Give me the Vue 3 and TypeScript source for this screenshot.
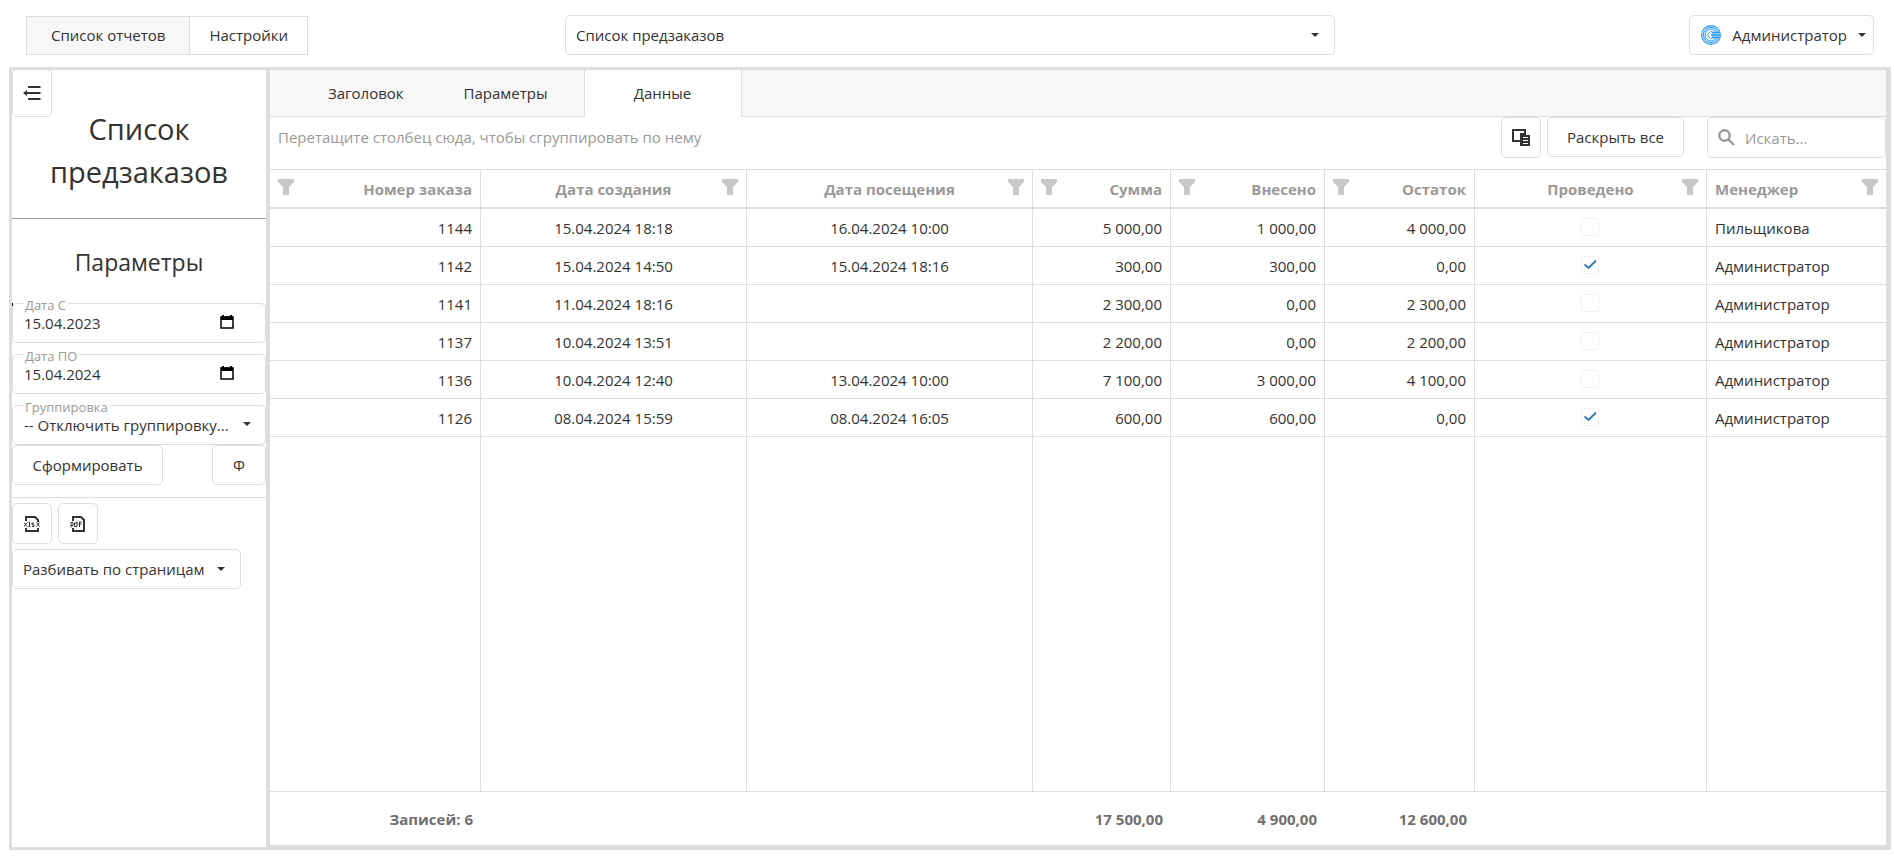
<script setup lang="ts">
import { computed, ref } from 'vue'

type Align = 'left' | 'center' | 'right'
type Field = 'number' | 'created' | 'visit' | 'sum' | 'paid' | 'rest' | 'posted' | 'manager'

interface Column {
  key: Field
  title: string
  align: Align
  weight: number
  total?: string
}

interface Order {
  number: string
  created: string
  visit: string
  sum: string
  paid: string
  rest: string
  posted: boolean
  manager: string
}

const columns: Column[] = [
  { key: 'number', title: 'Номер заказа', align: 'right', weight: 211, total: 'Записей: 6' },
  { key: 'created', title: 'Дата создания', align: 'center', weight: 266 },
  { key: 'visit', title: 'Дата посещения', align: 'center', weight: 286 },
  { key: 'sum', title: 'Сумма', align: 'right', weight: 138, total: '17 500,00' },
  { key: 'paid', title: 'Внесено', align: 'right', weight: 154, total: '4 900,00' },
  { key: 'rest', title: 'Остаток', align: 'right', weight: 150, total: '12 600,00' },
  { key: 'posted', title: 'Проведено', align: 'center', weight: 232 },
  { key: 'manager', title: 'Менеджер', align: 'left', weight: 179 },
]

const totalWeight = columns.reduce((acc, c) => acc + c.weight, 0)

const orders: Order[] = [
  { number: '1144', created: '15.04.2024 18:18', visit: '16.04.2024 10:00', sum: '5 000,00', paid: '1 000,00', rest: '4 000,00', posted: false, manager: 'Пильщикова' },
  { number: '1142', created: '15.04.2024 14:50', visit: '15.04.2024 18:16', sum: '300,00', paid: '300,00', rest: '0,00', posted: true, manager: 'Администратор' },
  { number: '1141', created: '11.04.2024 18:16', visit: '', sum: '2 300,00', paid: '0,00', rest: '2 300,00', posted: false, manager: 'Администратор' },
  { number: '1137', created: '10.04.2024 13:51', visit: '', sum: '2 200,00', paid: '0,00', rest: '2 200,00', posted: false, manager: 'Администратор' },
  { number: '1136', created: '10.04.2024 12:40', visit: '13.04.2024 10:00', sum: '7 100,00', paid: '3 000,00', rest: '4 100,00', posted: false, manager: 'Администратор' },
  { number: '1126', created: '08.04.2024 15:59', visit: '08.04.2024 16:05', sum: '600,00', paid: '600,00', rest: '0,00', posted: true, manager: 'Администратор' },
]

const tabs = ['Заголовок', 'Параметры', 'Данные']
const activeTab = ref('Данные')
const dateFrom = ref('15.04.2023')
const dateTo = ref('15.04.2024')
const search = ref('')

const visibleOrders = computed(() =>
  orders.filter((o) => Object.values(o).join(' ').toLowerCase().includes(search.value.toLowerCase())),
)
</script>

<template>
  <div class="page">
    <header class="topbar">
      <nav class="modes">
        <button type="button" class="mode mode-active">Список отчетов</button>
        <button type="button" class="mode">Настройки</button>
      </nav>
      <div class="select-box report-select">
        <select aria-label="Отчет">
          <option>Список предзаказов</option>
        </select>
        <svg class="caret" viewBox="0 0 8 4" aria-hidden="true"><path d="M0 0h8L4 4z" /></svg>
      </div>
      <div class="account">
        <button type="button" class="btn user">
          <svg class="logo" viewBox="0 0 20 20" aria-hidden="true">
            <circle cx="10" cy="10" r="10" fill="#d8ecfd" />
            <g fill="none" stroke="#2f9bf4">
              <circle cx="10" cy="10" r="9.4" stroke-width="1.1" />
              <circle cx="10" cy="10" r="7.6" stroke-width="1" />
              <circle cx="10" cy="10" r="5.800" stroke-width="1" />
            </g>
            <circle cx="10" cy="10" r="5.200" fill="#fff" />
            <path d="M12 7.300a3.300 3.300 0 1 0 0 5.400" fill="none" stroke="#2f9bf4" />
            <path d="M11 6.500h8.200v7h-8.200z" fill="#a9d5fb" />
            <path d="M11 7.500h8M10 10h9.500M11 12.500h8" stroke="#2f9bf4" stroke-width="1.4" />
          </svg>
          <span>Администратор</span>
          <svg class="caret" viewBox="0 0 8 4" aria-hidden="true"><path d="M0 0h8L4 4z" /></svg>
        </button>
      </div>
    </header>

    <main class="workspace">
      <aside class="sidebar">
        <button type="button" class="btn collapse" aria-label="Свернуть панель">
          <svg viewBox="0 0 18 14" aria-hidden="true">
            <path d="M5 1h12.500M4 7h13.500M5 13h12.500" fill="none" stroke="#333" stroke-width="2" />
            <path d="M4 4v6L0 7z" fill="#333" />
          </svg>
        </button>
        <h1>Список предзаказов</h1>
        <h2>Параметры</h2>

        <form class="params" @submit.prevent>
          <fieldset class="field marked">
            <legend><label for="date-from">Дата С</label></legend>
            <input id="date-from" v-model="dateFrom" type="text" />
            <button type="button" class="calendar" aria-label="Выбрать дату начала">
              <svg viewBox="0 0 14 14" aria-hidden="true">
                <path d="M3 0v3M11 0v3" stroke="#000" stroke-width="2" />
                <path d="M1 2h12v11H1z" fill="none" stroke="#000" stroke-width="1.500" />
                <path d="M1 1.500h12v3.500H1z" />
              </svg>
            </button>
          </fieldset>
          <fieldset class="field">
            <legend><label for="date-to">Дата ПО</label></legend>
            <input id="date-to" v-model="dateTo" type="text" />
            <button type="button" class="calendar" aria-label="Выбрать дату окончания">
              <svg viewBox="0 0 14 14" aria-hidden="true">
                <path d="M3 0v3M11 0v3" stroke="#000" stroke-width="2" />
                <path d="M1 2h12v11H1z" fill="none" stroke="#000" stroke-width="1.500" />
                <path d="M1 1.500h12v3.500H1z" />
              </svg>
            </button>
          </fieldset>
          <fieldset class="field">
            <legend><label for="grouping">Группировка</label></legend>
            <select id="grouping">
              <option>-- Отключить группировку...</option>
            </select>
            <svg class="caret" viewBox="0 0 8 4" aria-hidden="true"><path d="M0 0h8L4 4z" /></svg>
          </fieldset>
          <div class="actions">
            <button type="submit" class="btn build">Сформировать</button>
            <button type="button" class="btn filter-btn">Ф</button>
          </div>
        </form>

        <div class="export">
          <div class="export-row">
            <button type="button" class="btn square" aria-label="Экспорт в XLSX">
              <svg viewBox="0 0 16 16" aria-hidden="true">
                <path d="M2 5V1h9l3 3v2M2 12v3h12v-3" fill="none" stroke="#333" stroke-width="2" />
                <path d="M0 6.500l3 4M3 6.500l-3 4M4.500 6h1v4.500M4.500 10.500h2M10 7H8v1.700h2v1.800H8M12.500 6.500l3 4M15.500 6.500l-3 4" fill="none" stroke="#333" />
              </svg>
            </button>
            <button type="button" class="btn square" aria-label="Экспорт в PDF">
              <svg viewBox="0 0 16 16" aria-hidden="true">
                <path d="M3 5V1h8l3 3v11H3v-3" fill="none" stroke="#333" stroke-width="2" />
                <path d="M1 11.500v-5h2v3H1M7 5.500v5H4.500V7H7M9.500 11V6H12M8.500 8h3" fill="none" stroke="#333" />
              </svg>
            </button>
          </div>
          <div class="select-box paging">
            <select aria-label="Разбиение на страницы">
              <option>Разбивать по страницам</option>
            </select>
            <svg class="caret" viewBox="0 0 8 4" aria-hidden="true"><path d="M0 0h8L4 4z" /></svg>
          </div>
        </div>
      </aside>

      <section class="content">
        <div class="tabs" role="tablist">
          <button
            v-for="tab in tabs"
            :key="tab"
            type="button"
            role="tab"
            class="tab"
            :class="{ 'tab-active': tab === activeTab }"
            :aria-selected="tab === activeTab"
            @click="activeTab = tab"
          >
            {{ tab }}
          </button>
        </div>

        <div class="toolbar">
          <p class="hint">Перетащите столбец сюда, чтобы сгруппировать по нему</p>
          <button type="button" class="btn square" aria-label="Выбор столбцов">
            <svg class="chooser" viewBox="0 0 18 17" aria-hidden="true">
              <path d="M1 1h12v11H1z" fill="none" stroke="#333" stroke-width="2" />
              <path d="M8 4h6v2h4v11H8z" fill="#333" />
              <path d="M11 8.500h5M11 11.500h5M11 14.500h5" stroke="#fff" />
            </svg>
          </button>
          <button type="button" class="btn expand">Раскрыть все</button>
          <label class="search">
            <svg viewBox="0 0 17 17" aria-hidden="true">
              <circle cx="6.500" cy="6.500" r="5.200" fill="none" stroke="#999" stroke-width="2.400" />
              <path d="M10.500 10.500l5.500 5.500" stroke="#999" stroke-width="2.400" />
            </svg>
            <input v-model="search" type="text" placeholder="Искать..." aria-label="Поиск" />
          </label>
        </div>

        <div class="grid">
          <table>
            <colgroup>
              <col v-for="c in columns" :key="c.key" :style="{ width: (c.weight / totalWeight) * 100 + '%' }" />
            </colgroup>
            <thead>
              <tr>
                <th v-for="c in columns" :key="c.key" scope="col">
                  <div class="head" :class="c.align">
                    <span>{{ c.title }}</span>
                    <svg viewBox="0 0 16 16" aria-hidden="true"><path d="M0 0h16v3l-5 5v8H5V8L0 3z" /></svg>
                  </div>
                </th>
              </tr>
            </thead>
            <tbody>
              <tr v-for="o in visibleOrders" :key="o.number">
                <td v-for="c in columns" :key="c.key" :class="c.align">
                  <span v-if="c.key === 'posted'" class="check">
                    <input type="checkbox" :checked="o.posted" disabled :aria-label="'Проведено, заказ ' + o.number" />
                    <svg v-if="o.posted" viewBox="0 0 18 18" aria-hidden="true">
                      <path d="M3.500 8.500l4 3.500 7.500-7.500" fill="none" stroke="#337ab7" stroke-width="2" />
                    </svg>
                  </span>
                  <template v-else>{{ o[c.key] }}</template>
                </td>
              </tr>
              <tr class="filler" aria-hidden="true">
                <td v-for="c in columns" :key="c.key"></td>
              </tr>
            </tbody>
            <tfoot>
              <tr>
                <td v-for="c in columns" :key="c.key" :class="c.align">{{ c.total }}</td>
              </tr>
            </tfoot>
          </table>
        </div>
      </section>
    </main>
  </div>
</template>

<style>
body {
  margin: 0;
  background: #fff;
}
</style>

<style scoped>
*,
*::before,
*::after {
  box-sizing: border-box;
}

.page {
  display: flex;
  flex-direction: column;
  min-height: 100vh;
  padding: 15px 3px 6px 9px;
  color: #333;
  font-family: 'Open Sans', 'Noto Sans', sans-serif;
  font-size: 15px;
  line-height: 20px;
}

button,
input,
select {
  margin: 0;
  color: inherit;
  font: inherit;
}

button {
  cursor: pointer;
}

.topbar {
  display: grid;
  grid-template-columns: 7fr 10fr 7fr;
  align-items: end;
  margin-bottom: 12px;
  padding: 0 17px;
}

.modes {
  display: flex;
}

.mode {
  height: 39px;
  padding: 0 19px 2px;
  border: 1px solid #ddd;
  background: #fff;
}

.mode + .mode {
  border-left: 0;
}

.mode-active {
  padding: 0 24px 2px;
  background: #f7f7f7;
}

.select-box {
  position: relative;
}

.select-box select {
  width: 100%;
  height: 40px;
  padding: 0 36px 0 10px;
  border: 1px solid #ddd;
  border-radius: 5px;
  background: #fff;
  appearance: none;
}

.caret {
  flex: none;
  width: 8px;
  height: 4px;
  fill: #333;
}

.select-box .caret {
  position: absolute;
  top: 18px;
  right: 16px;
  pointer-events: none;
}

.account {
  display: flex;
  justify-content: flex-end;
}

.btn {
  display: flex;
  align-items: center;
  justify-content: center;
  height: 40px;
  padding: 0;
  border: 1px solid #ddd;
  border-radius: 5px;
  background: #fff;
}

.user {
  gap: 11px;
  padding: 0 7px 0 11px;
}

.logo {
  width: 20px;
  height: 20px;
}

.workspace {
  display: flex;
  flex: 1;
  border-top: 3px solid #ddd;
  border-left: 3px solid #ddd;
}

.sidebar {
  display: flex;
  flex: none;
  flex-direction: column;
  width: 254px;
  border-bottom: 3px solid #ddd;
}

.collapse {
  width: 40px;
  height: 48px;
  margin-top: -1px;
}

.collapse svg {
  width: 18px;
  height: 14px;
}

h1,
h2 {
  margin: 0;
  font-weight: 400;
  text-align: center;
}

h1 {
  height: 112px;
  margin-top: -10px;
  padding: 0 24px;
  border-bottom: 1px solid #999;
  font-size: 29px;
  line-height: 43px;
}

h2 {
  margin: 26px 0 14px;
  font-size: 23px;
  line-height: 34px;
}

.params {
  display: flex;
  flex-direction: column;
}

.field {
  position: relative;
  height: 50px;
  min-width: 0;
  margin: 0;
  padding: 0 11px;
  border: 1px solid #ddd;
  border-radius: 5px;
}

.field + .field {
  margin-top: 1px;
}

.marked::before {
  position: absolute;
  top: -10px;
  left: -1px;
  width: 1px;
  height: 3px;
  background: #000;
  content: '';
}

.field legend {
  height: 20px;
  margin-left: -1px;
  padding: 4px 2px 0;
  color: #999;
  font-size: 13px;
  line-height: 16px;
}

.field input,
.field select {
  display: block;
  width: 100%;
  height: 20px;
  padding: 0;
  border: 0;
  outline: 0;
  background: transparent;
  appearance: none;
}

.calendar {
  position: absolute;
  top: 2px;
  right: 31px;
  width: 14px;
  height: 14px;
  padding: 0;
  border: 0;
  background: none;
}

.calendar svg {
  display: block;
}

.field .caret {
  position: absolute;
  top: 7px;
  right: 14px;
  pointer-events: none;
}

.actions {
  display: flex;
  justify-content: space-between;
}

.build {
  width: 151px;
}

.filter-btn {
  width: 54px;
}

.export {
  margin-top: 12px;
  padding-top: 5px;
  border-top: 1px solid #ddd;
}

.export-row {
  display: flex;
  gap: 6px;
  margin-bottom: 5px;
}

.square {
  width: 40px;
  height: 41px;
}

.square svg {
  width: 16px;
  height: 16px;
}

.square .chooser {
  width: 18px;
  height: 17px;
}

.paging {
  width: 229px;
}

.content {
  display: flex;
  flex: 1;
  flex-direction: column;
  min-width: 0;
  border: solid #ddd;
  border-width: 0 5px 5px 4px;
}

.tabs {
  display: flex;
  height: 47px;
  padding-left: 28px;
  border-bottom: 1px solid #ddd;
  background: #f7f7f7;
}

.tab {
  height: 47px;
  padding: 0 30px 2px;
  border: 0;
  background: none;
}

.tab:nth-child(2) {
  padding-right: 36px;
}

.tab-active {
  min-width: 158px;
  border: solid #ddd;
  border-width: 0 1px;
  background: #fff;
}

.toolbar {
  display: flex;
  align-items: flex-start;
  height: 52px;
}

.hint {
  flex: 1;
  margin: 0;
  padding: 10px 8px;
  color: #999;
}

.expand {
  width: 137px;
  margin: 0 23px 0 6px;
}

.search {
  display: flex;
  gap: 10px;
  align-items: center;
  width: 179px;
  height: 41px;
  padding: 0 10px;
  border: 1px solid #ddd;
  border-radius: 5px;
}

.search svg {
  flex: none;
  width: 17px;
  height: 17px;
}

.search input {
  width: 100%;
  min-width: 0;
  padding: 0;
  border: 0;
  outline: 0;
  background: none;
}

.search input::placeholder {
  color: #999;
  opacity: 1;
}

.grid {
  display: grid;
  flex: 1;
}

table {
  width: 100%;
  height: 100%;
  border-collapse: separate;
  border-spacing: 0;
  table-layout: fixed;
}

th {
  height: 40px;
  padding: 0 8px;
  border: solid #ddd;
  border-width: 1px 1px 2px 0;
  color: #999;
  font-weight: 700;
}

td {
  height: 38px;
  padding: 0 8px;
  border: solid #ddd;
  border-width: 0 1px 1px 0;
  white-space: nowrap;
}

th:last-child,
td:last-child {
  border-right: 0;
}

.left {
  text-align: left;
}

.center {
  text-align: center;
}

.right {
  text-align: right;
}

.head {
  display: grid;
  grid-template-columns: 1fr 16px;
  column-gap: 8px;
  align-items: center;
}

.head.right {
  grid-template-columns: 16px 1fr;
}

.head.right svg {
  order: -1;
}

.head.center {
  padding-left: 24px;
}

.head svg {
  display: block;
  width: 16px;
  height: 16px;
  margin-bottom: 3px;
  fill: #c8c8c8;
}

.check {
  display: inline-grid;
  width: 18px;
  height: 18px;
  vertical-align: top;
}

.check > * {
  grid-area: 1 / 1;
  width: 18px;
  height: 18px;
}

.check input {
  border: 1px solid #f2f2f2;
  border-radius: 2px;
  background: #fff;
  appearance: none;
}

.filler td {
  height: auto;
}

tfoot td {
  height: 53px;
  padding: 0 8px;
  border: 0;
  color: #707070;
  font-weight: 700;
}
</style>
